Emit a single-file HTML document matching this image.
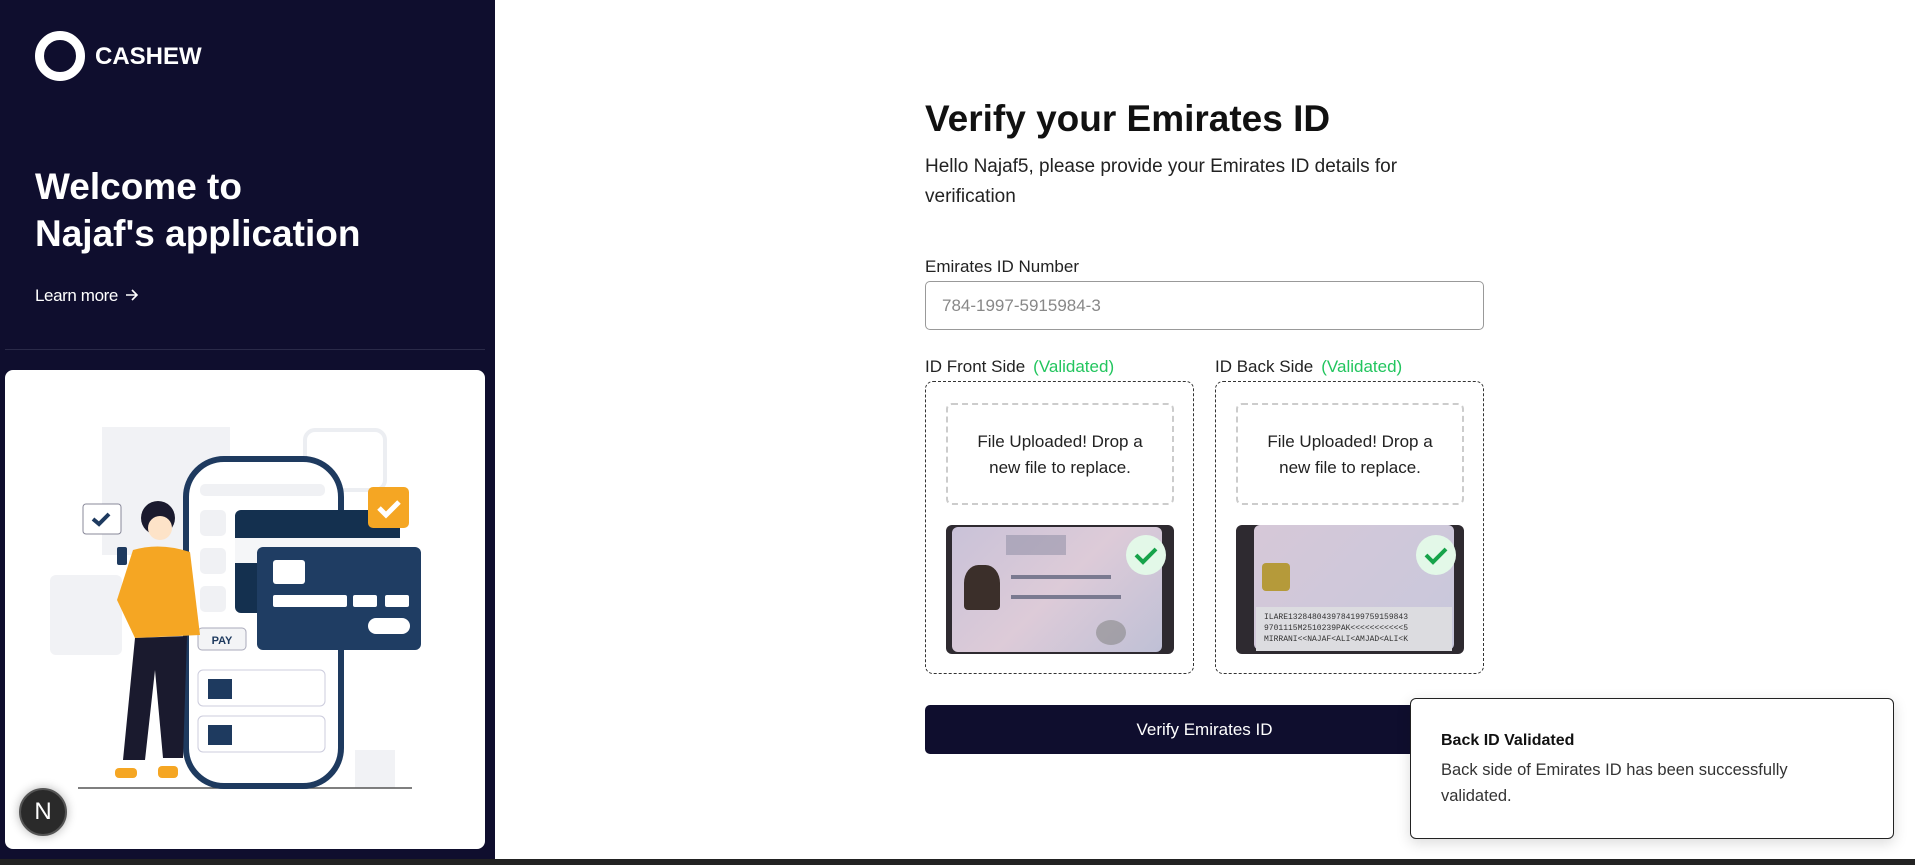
<!DOCTYPE html>
<html><head><meta charset="utf-8"><style>
*{margin:0;padding:0;box-sizing:border-box}
body{width:1915px;height:865px;overflow:hidden;background:#fff;font-family:"Liberation Sans",Arial,sans-serif;position:relative;color:#111}
.side{position:absolute;left:0;top:0;width:495px;height:859px;background:#0f0e2e}
.logo{position:absolute;left:35px;top:31px;width:50px;height:50px;border:9px solid #fff;border-radius:50%}
.brand{position:absolute;left:95px;top:43px;color:#fff;font-weight:bold;font-size:24px}
.welcome{position:absolute;left:35px;top:163px;color:#fff;font-weight:bold;font-size:37px;line-height:47px}
.learn{position:absolute;left:35px;top:286px;color:#fff;font-size:17px;letter-spacing:-.4px}
.div{position:absolute;left:5px;top:349px;width:480px;height:1px;background:#2a2a48}
.card{position:absolute;left:5px;top:370px;width:480px;height:479px;background:#fff;border-radius:8px;overflow:hidden}
.nbtn{position:absolute;left:19px;top:788px;width:48px;height:48px;border-radius:50%;background:#2a2a2a;border:2px solid #555;color:#fff;font-size:24px;text-align:center;line-height:44px;box-shadow:0 0 10px rgba(0,0,0,.3)}
.bottom{position:absolute;left:0;top:859px;width:1915px;height:6px;background:#222}
h1{position:absolute;left:925px;top:98px;font-size:37px;font-weight:bold;color:#111}
.sub{position:absolute;left:925px;top:152px;font-size:19px;line-height:30px;color:#222;width:560px}
.lbl{position:absolute;font-size:17px;color:#222}
.green{color:#22c55e;margin-left:8px}
.input{position:absolute;left:925px;top:281px;width:559px;height:49px;border:1px solid #999;border-radius:5px;font-size:17px;color:#888;padding:14px 16px}
.box{position:absolute;top:381px;width:269px;height:293px;border:1.5px dashed #333;border-radius:8px}
.drop{position:absolute;left:20px;top:21px;width:228px;height:102px;border:2px dashed #ccc;border-radius:6px;text-align:center;font-size:17px;line-height:26px;color:#222;padding-top:24px}
.img{position:absolute;left:20px;top:143px;width:228px;height:129px;border-radius:6px;overflow:hidden;background:#2e2a30}
.chk{position:absolute;right:8px;top:10px;width:40px;height:40px;border-radius:50%;background:#e3f8e8}
.btn{position:absolute;left:925px;top:705px;width:559px;height:49px;background:#0f0e2e;border-radius:5px;color:#fff;font-size:17px;text-align:center;line-height:49px}
.toast{position:absolute;left:1410px;top:698px;width:484px;height:141px;background:#fff;border:1px solid #222;border-radius:6px;box-shadow:0 4px 14px rgba(0,0,0,.15);padding:33px 30px}
.toast b{display:block;font-size:16px;margin-bottom:7px;color:#111}
.toast p{font-size:16.5px;line-height:26px;color:#333;width:420px}
</style></head><body>
<div class="side">
<div class="logo"></div><div class="brand">CASHEW</div>
<div class="welcome">Welcome to<br>Najaf's application</div>
<div class="learn">Learn more <svg width="14" height="14" viewBox="0 0 14 14" style="vertical-align:-1px;margin-left:3px"><path d="M1 7h11M7 2l5 5-5 5" stroke="#fff" stroke-width="1.6" fill="none"/></svg></div>
<div class="div"></div>
<div class="card">
<svg width="480" height="479" viewBox="0 0 480 479">
<g fill="#f1f2f5">
<rect x="97" y="57" width="128" height="128"/><rect x="45" y="205" width="72" height="80" rx="6"/>
<rect x="300" y="60" width="80" height="60" rx="10" fill="none" stroke="#eceef2" stroke-width="4"/>
<rect x="350" y="380" width="40" height="38"/>
</g>
<line x1="73" y1="418" x2="407" y2="418" stroke="#555" stroke-width="1.5"/>
<rect x="181" y="89" width="155" height="327" rx="38" fill="#fff" stroke="#1e3a5f" stroke-width="6"/>
<rect x="195" y="114" width="125" height="12" rx="5" fill="#f0f1f4"/>
<rect x="195" y="140" width="26" height="26" rx="5" fill="#f0f1f4"/><rect x="195" y="178" width="26" height="26" rx="5" fill="#f0f1f4"/><rect x="195" y="216" width="26" height="26" rx="5" fill="#f0f1f4"/>
<rect x="230" y="140" width="165" height="103" rx="6" fill="#14304f"/>
<rect x="230" y="168" width="165" height="25" fill="#f5f6f8"/>
<rect x="252" y="177" width="164" height="103" rx="6" fill="#1f3d63"/>
<rect x="268" y="190" width="32" height="24" rx="3" fill="#fff"/>
<rect x="268" y="225" width="74" height="12" rx="2" fill="#fff"/><rect x="348" y="225" width="24" height="12" rx="2" fill="#fff"/><rect x="380" y="225" width="24" height="12" rx="2" fill="#fff"/>
<rect x="363" y="248" width="42" height="16" rx="8" fill="#fff"/>
<rect x="363" y="117" width="41" height="41" rx="5" fill="#f5a623"/>
<path d="M374 138l7 7 13-13" stroke="#fff" stroke-width="5" fill="none"/>
<rect x="193" y="258" width="48" height="22" rx="4" fill="#f3f4f6" stroke="#aab"/>
<text x="217" y="274" font-size="11" font-weight="bold" text-anchor="middle" fill="#1e3a5f" font-family="Liberation Sans">PAY</text>
<rect x="193" y="300" width="127" height="36" rx="5" fill="#fff" stroke="#ccd"/><rect x="203" y="309" width="24" height="20" fill="#1e3a5f"/>
<rect x="193" y="346" width="127" height="36" rx="5" fill="#fff" stroke="#ccd"/><rect x="203" y="355" width="24" height="20" fill="#1e3a5f"/>
<rect x="78" y="134" width="38" height="30" rx="3" fill="#fff" stroke="#889"/>
<path d="M88 149l6 5 10-10" stroke="#1e3a5f" stroke-width="4" fill="none"/>
<circle cx="153" cy="148" r="17" fill="#1a1a2e"/><circle cx="155" cy="158" r="12" fill="#fde3c8"/>
<path d="M128 180 Q155 172 185 182 L195 265 L130 268 L112 230 Z" fill="#f5a623"/>
<path d="M130 268 L182 266 L178 388 L158 388 L150 300 L140 390 L118 390 Z" fill="#1a1a2e"/>
<rect x="110" y="398" width="22" height="10" rx="4" fill="#f5a623"/><rect x="153" y="396" width="20" height="12" rx="4" fill="#f5a623"/>
<rect x="112" y="177" width="10" height="18" rx="2" fill="#1e3a5f"/>
</svg>
</div>
</div>
<div class="nbtn">N</div>
<div class="bottom"></div>

<h1>Verify your Emirates ID</h1>
<div class="sub">Hello Najaf5, please provide your Emirates ID details for verification</div>
<div class="lbl" style="left:925px;top:257px">Emirates ID Number</div>
<div class="input">784-1997-5915984-3</div>
<div class="lbl" style="left:925px;top:357px">ID Front Side<span class="green">(Validated)</span></div>
<div class="lbl" style="left:1215px;top:357px">ID Back Side<span class="green">(Validated)</span></div>
<div class="box" style="left:925px"><div class="drop">File Uploaded! Drop a<br>new file to replace.</div>
<div class="img"><div style="position:absolute;left:6px;top:2px;width:210px;height:125px;border-radius:6px;background:linear-gradient(135deg,#c9c2d8,#ddcbd8 50%,#bfc0d6)"></div>
<div style="position:absolute;left:18px;top:40px;width:36px;height:45px;background:#3b2f2a;border-radius:40% 40% 4px 4px"></div>
<div style="position:absolute;left:60px;top:10px;width:60px;height:20px;background:#8a8aa0;opacity:.5"></div>
<div style="position:absolute;left:65px;top:50px;width:100px;height:4px;background:#7a7a90"></div>
<div style="position:absolute;left:65px;top:70px;width:110px;height:4px;background:#7a7a90"></div>
<div style="position:absolute;left:150px;top:95px;width:30px;height:25px;background:#888;border-radius:50%;opacity:.6"></div>
<div class="chk"><svg width="40" height="40"><path d="M10 20l7 7 13-13" stroke="#16a34a" stroke-width="4" fill="none"/></svg></div></div></div>
<div class="box" style="left:1215px"><div class="drop">File Uploaded! Drop a<br>new file to replace.</div>
<div class="img"><div style="position:absolute;left:18px;top:0;width:200px;height:125px;border-radius:6px;background:linear-gradient(135deg,#d6c8d8,#c8c8dc)"></div>
<div style="position:absolute;left:26px;top:38px;width:28px;height:28px;background:#b59a3a;border-radius:4px"></div>
<div style="position:absolute;left:20px;top:82px;width:196px;height:44px;background:#dcdce0;font-family:'Liberation Mono',monospace;font-size:8px;line-height:11px;color:#333;padding:5px 8px">ILARE1328480439784199759159843<br>9701115M2510239PAK&lt;&lt;&lt;&lt;&lt;&lt;&lt;&lt;&lt;&lt;&lt;5<br>MIRRANI&lt;&lt;NAJAF&lt;ALI&lt;AMJAD&lt;ALI&lt;K</div>
<div class="chk"><svg width="40" height="40"><path d="M10 20l7 7 13-13" stroke="#16a34a" stroke-width="4" fill="none"/></svg></div></div></div>
<div class="btn">Verify Emirates ID</div>
<div class="toast"><b>Back ID Validated</b><p>Back side of Emirates ID has been successfully validated.</p></div>
</body></html>
